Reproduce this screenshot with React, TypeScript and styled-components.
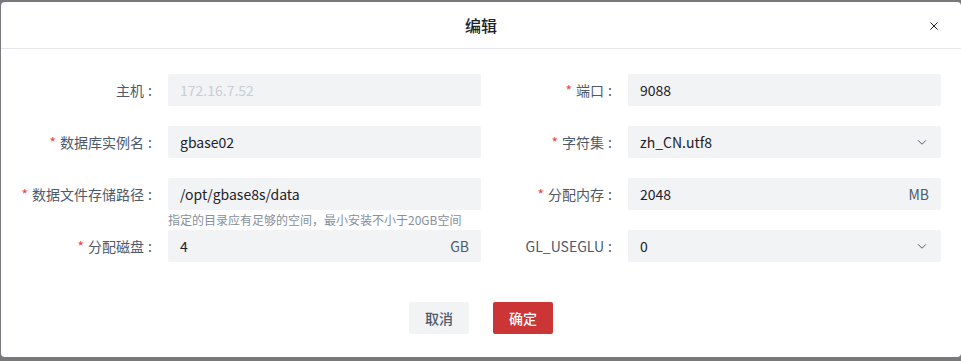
import React from "react";
import styled, { createGlobalStyle } from "styled-components";

const Global = createGlobalStyle`
  html, body { margin: 0; padding: 0; }
  body {
    background: #77797d;
    font-family: "Noto Sans CJK SC", "Noto Sans", sans-serif;
    -webkit-font-smoothing: antialiased;
  }
`;

const Modal = styled.div`
  margin: 2px 0 0 1px;
  width: 960px;
  background: #fff;
  border-radius: 4px;
  box-sizing: border-box;
`;

const Header = styled.div`
  height: 46px;
  border-bottom: 1px solid #e5e6eb;
  display: flex;
  align-items: center;
  justify-content: center;
  position: relative;
`;

const Title = styled.div`
  font-size: 16px;
  font-weight: 500;
  color: #1d2129;
`;

const Close = styled.button`
  position: absolute;
  right: 21px;
  top: 18px;
  width: 12px;
  height: 12px;
  padding: 0;
  border: none;
  background: transparent;
  display: flex;
  color: #1d2129;
`;

const Body = styled.div`
  padding: 25px 20px 0 20px;
`;

const Grid = styled.div`
  display: grid;
  grid-template-columns: 1fr 1fr;
`;

const Item = styled.div<{ $help?: boolean }>`
  display: grid;
  grid-template-columns: 147px 313px;
  margin-bottom: ${(p) => (p.$help ? "0" : "20px")};
`;

const Label = styled.label`
  height: 32px;
  display: flex;
  align-items: center;
  justify-content: flex-end;
  padding-right: 16px;
  font-size: 14px;
  color: #4e5969;
  white-space: nowrap;
`;

const Star = styled.span`
  color: #f53f3f;
  margin-right: 4px;
  font-size: 14px;
`;

const Colon = styled.span`
  margin-left: 4px;
`;

const Control = styled.div`
  display: flex;
  flex-direction: column;
`;

const InputBox = styled.div<{ $disabled?: boolean }>`
  height: 32px;
  box-sizing: border-box;
  background: #f2f3f5;
  border-radius: 2px;
  padding: 0 12px;
  display: flex;
  align-items: center;
  font-size: 14px;
  color: ${(p) => (p.$disabled ? "#c9cdd4" : "#1d2129")};
`;

const Value = styled.span`
  flex: 1;
`;

const Suffix = styled.span`
  color: #4e5969;
  font-size: 14px;
`;

const Arrow = styled.span`
  display: flex;
  color: #4e5969;
  margin-right: 1px;
`;

const Help = styled.div`
  height: 20px;
  line-height: 20px;
  font-size: 12px;
  color: #86909c;
`;

const Footer = styled.div`
  display: flex;
  justify-content: center;
  gap: 24px;
  padding: 20px 0 23px;
`;

const Button = styled.button<{ $primary?: boolean }>`
  width: 60px;
  height: 32px;
  border: none;
  border-radius: 2px;
  font-family: inherit;
  font-size: 14px;
  font-weight: 500;
  background: ${(p) => (p.$primary ? "#cb3535" : "#f2f3f5")};
  color: ${(p) => (p.$primary ? "#fff" : "#4e5969")};
`;

const DownIcon = () => (
  <svg width="12" height="12" viewBox="0 0 48 48" fill="none" stroke="currentColor" strokeWidth="4">
    <path d="M39.6 17.443 24.043 33 8.487 17.443" />
  </svg>
);

const CloseIcon = () => (
  <svg width="12" height="12" viewBox="0 0 48 48" fill="none" stroke="currentColor" strokeWidth="4">
    <path d="M9.857 9.858 24 24m0 0 14.142 14.142M24 24 38.142 9.858M24 24 9.857 38.142" />
  </svg>
);

type Field = {
  label: string;
  required?: boolean;
  value: string;
  disabled?: boolean;
  suffix?: string;
  select?: boolean;
  help?: string;
};

const fields: Field[] = [
  { label: "主机", value: "172.16.7.52", disabled: true },
  { label: "端口", required: true, value: "9088" },
  { label: "数据库实例名", required: true, value: "gbase02" },
  { label: "字符集", required: true, value: "zh_CN.utf8", select: true },
  {
    label: "数据文件存储路径",
    required: true,
    value: "/opt/gbase8s/data",
    help: "指定的目录应有足够的空间，最小安装不小于20GB空间",
  },
  { label: "分配内存", required: true, value: "2048", suffix: "MB" },
  { label: "分配磁盘", required: true, value: "4", suffix: "GB" },
  { label: "GL_USEGLU", value: "0", select: true },
];

export default function App() {
  return (
    <>
      <Global />
      <Modal>
        <Header>
          <Title>编辑</Title>
          <Close aria-label="close">
            <CloseIcon />
          </Close>
        </Header>
        <Body>
          <Grid>
            {fields.map((f) => (
              <Item key={f.label} $help={!!f.help}>
                <Label>
                  {f.required && <Star>*</Star>}
                  {f.label}
                  <Colon>:</Colon>
                </Label>
                <Control>
                  <InputBox $disabled={f.disabled}>
                    <Value>{f.value}</Value>
                    {f.suffix && <Suffix>{f.suffix}</Suffix>}
                    {f.select && (
                      <Arrow>
                        <DownIcon />
                      </Arrow>
                    )}
                  </InputBox>
                  {f.help && <Help>{f.help}</Help>}
                </Control>
              </Item>
            ))}
          </Grid>
        </Body>
        <Footer>
          <Button>取消</Button>
          <Button $primary>确定</Button>
        </Footer>
      </Modal>
    </>
  );
}
